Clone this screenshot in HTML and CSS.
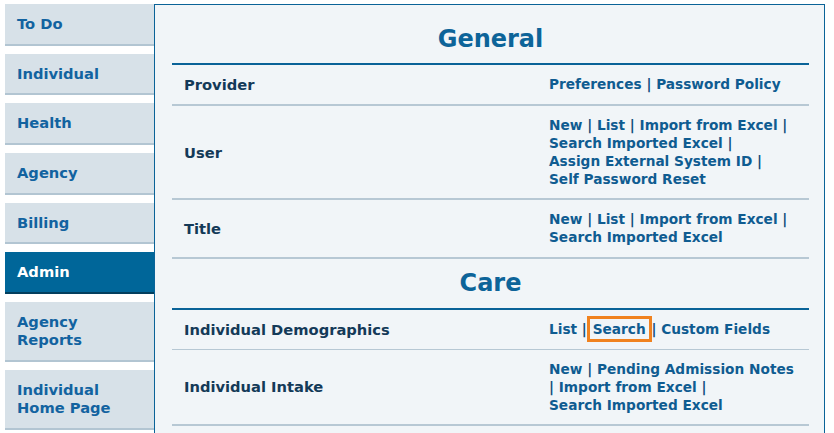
FILE: index.html
```html
<!DOCTYPE html>
<html lang="en">
<head>
<meta charset="utf-8">
<title>Admin</title>
<link rel="stylesheet" href="styles.css">
</head>
<body>
<div class="page">
  <nav class="sidebar">
    <a class="tab">To Do</a>
    <a class="tab">Individual</a>
    <a class="tab">Health</a>
    <a class="tab">Agency</a>
    <a class="tab">Billing</a>
    <a class="tab active">Admin</a>
    <a class="tab">Agency<br>Reports</a>
    <a class="tab">Individual<br>Home Page</a>
  </nav>
  <main class="panel">
    <h2 class="heading">General</h2>
    <div class="row">
      <div class="label">Provider</div>
      <div class="links"><a>Preferences</a> | <a>Password Policy</a></div>
    </div>
    <div class="row">
      <div class="label">User</div>
      <div class="links"><a>New</a> | <a>List</a> | <a>Import from Excel</a> | <a>Search Imported Excel</a> | <a>Assign External System ID</a> | <a>Self Password Reset</a></div>
    </div>
    <div class="row">
      <div class="label">Title</div>
      <div class="links"><a>New</a> | <a>List</a> | <a>Import from Excel</a> | <a>Search Imported Excel</a></div>
    </div>
    <h2 class="heading">Care</h2>
    <div class="row thin">
      <div class="label">Individual Demographics</div>
      <div class="links"><a>List</a> | <a class="highlight">Search</a> | <a>Custom Fields</a></div>
    </div>
    <div class="row">
      <div class="label">Individual Intake</div>
      <div class="links"><a>New</a> | <a>Pending Admission Notes</a> | <a>Import from Excel</a> | <a>Search Imported Excel</a></div>
    </div>
  </main>
</div>
</body>
</html>
```

FILE: styles.css
```css
html, body {
  margin: 0;
  padding: 0;
  background: #ffffff;
  overflow: hidden;
}
body {
  font-family: "DejaVu Sans", Verdana, sans-serif;
  font-weight: bold;
}
.page {
  display: flex;
  align-items: flex-start;
  padding-top: 4px;
}
.sidebar {
  display: flex;
  flex-direction: column;
  gap: 8px;
  margin-left: 5px;
  width: 149px;
  flex: none;
}
.tab {
  display: block;
  background: #d7e1e8;
  border-bottom: 2px solid #b2c5d2;
  color: #1263a0;
  font-size: 14.7px;
  line-height: 18px;
  padding: 11px 12px 10.7px 12px;
}
.tab.active {
  background: #006699;
  border-bottom-color: #033f5e;
  color: #ffffff;
}
.panel {
  flex: none;
  width: 671px;
  min-height: 440px;
  box-sizing: border-box;
  border: 1.5px solid #0a6398;
  background: #f1f5f8;
  padding: 9px 15px 0 17px;
}
.heading {
  margin: 0;
  text-align: center;
  font-size: 24px;
  line-height: 30px;
  color: #0d6499;
  padding: 9.5px 0 9.5px;
  border-bottom: 2px solid #0a6398;
}
.row {
  display: grid;
  grid-template-columns: 377px 1fr;
  border-bottom: 2px solid #b7c8d4;
}
.row.thin {
  border-bottom-width: 1px;
}
.label {
  display: flex;
  align-items: center;
  padding: 10px 12px;
  font-size: 14.7px;
  line-height: 19px;
  color: #143a58;
}
.links {
  padding: 10px 12px 10.3px 0;
  font-size: 13.7px;
  line-height: 18px;
  color: #124f7c;
}
.links a {
  color: #0f5c91;
  white-space: nowrap;
}
.links a.highlight {
  outline: 3px solid #f0821f;
  outline-offset: 2px;
  padding: 0 1px;
}
```
